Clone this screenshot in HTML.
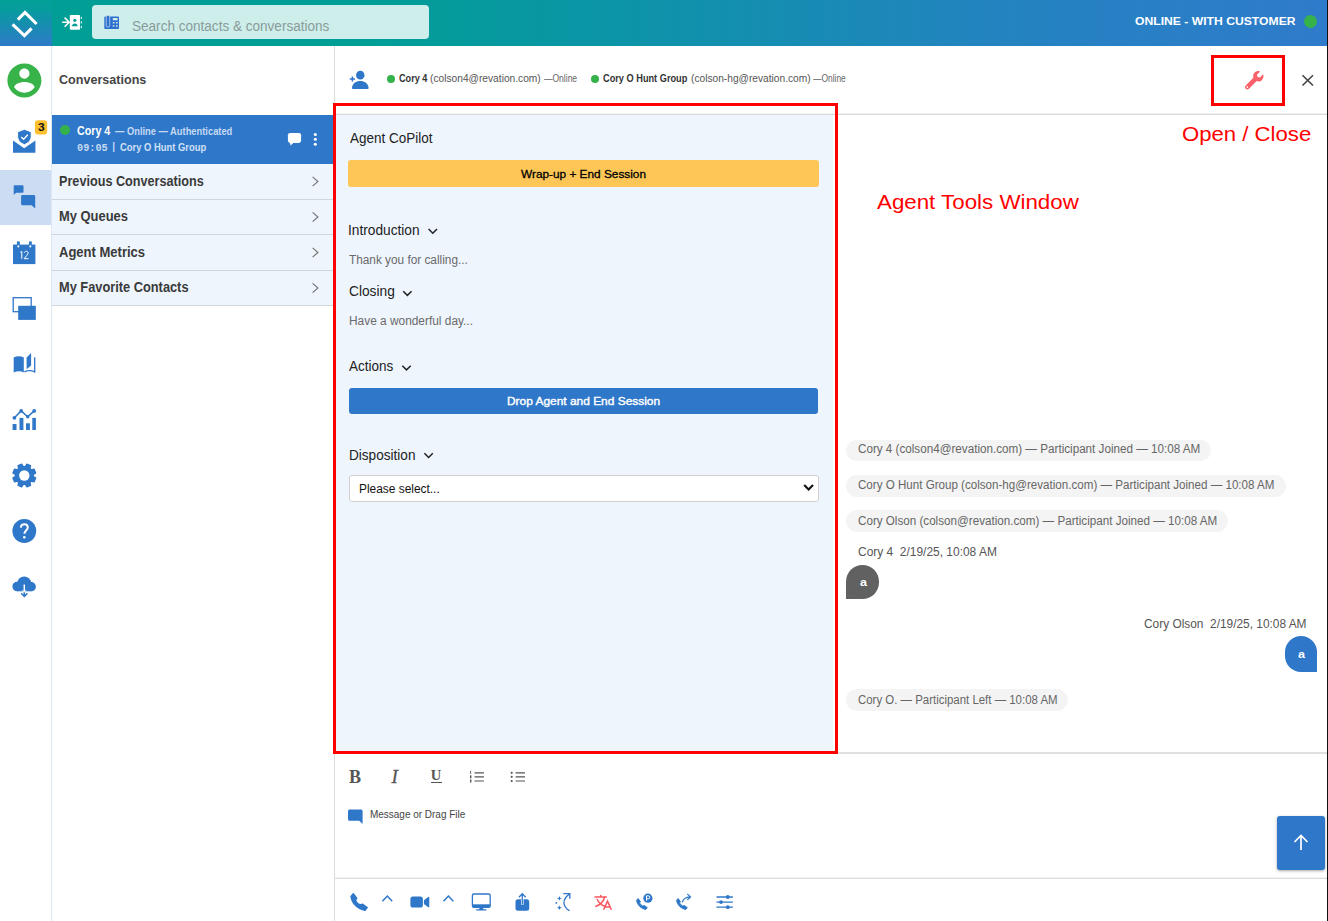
<!DOCTYPE html>
<html>
<head>
<meta charset="utf-8">
<style>
*{box-sizing:border-box;margin:0;padding:0}
html,body{width:1328px;height:921px;overflow:hidden;background:#fff;font-family:"Liberation Sans",sans-serif;color:#333}
.a{position:absolute}
.t{position:absolute;white-space:nowrap;line-height:1;transform-origin:0 0}
svg{position:absolute;overflow:visible}
#hdr{left:0;top:0;width:1328px;height:45.6px;background:linear-gradient(90deg,#019e96 0%,#019e96 28%,#0b95a6 45%,#2383c0 75%,#2f7bcb 100%);box-shadow:0 0 2px rgba(0,20,60,.45)}
#logo{left:0;top:0;width:52px;height:45.6px;background:linear-gradient(180deg,#02a097 0%,#069c9d 20%,#2f7ac9 100%)}
#search{left:92px;top:5.3px;width:337px;height:33.4px;background:#cdeeea;border-radius:4px}
#sdot{left:1304.2px;top:15.2px;width:13.2px;height:13.2px;border-radius:50%;background:#35b34a}
#rail{left:0;top:46px;width:52px;height:875px;background:#fff;border-right:1px solid #dfe7f4}
#railsel{left:0;top:169.7px;width:51px;height:55.5px;background:#ccddf3}
#lp{left:52px;top:46px;width:283px;height:875px;background:#fff;border-right:1px solid #dcdcdc}
#conv{left:52px;top:114.7px;width:282px;height:49.3px;background:#2f77c9}
.row{left:52px;width:282px;height:35.5px;background:#eff5fd;border-bottom:1px solid #cfd6de}
#chdr{left:335px;top:46px;width:992px;height:68.5px;background:#fff;border-bottom:1px solid #d9d9d9;box-shadow:inset 0 -1px 0 #f2f2f2}
#cop{left:335px;top:114.8px;width:497.6px;height:637.2px;background:#eef5fd}
#redbox{left:333.1px;top:103px;width:505px;height:650.9px;border:3px solid #ff0000}
#redbox2{left:1211px;top:55px;width:74px;height:51px;border:3px solid #ff0000}
.pill{background:#f4f4f4;border-radius:11px;height:21.6px}
#edit{left:335px;top:752px;width:992px;height:127px;border-top:2px solid #e0e0e0;border-bottom:1px solid #dcdcdc;background:#fff;box-shadow:inset 0 -1px 0 #f4f4f4}
#rline{left:1327px;top:0;width:1px;height:921px;background:#111}
</style>
</head>
<body>
<div class="a" id="hdr"></div>
<div class="a" id="logo"></div>
<div class="a" id="search"></div>
<div class="a" id="sdot"></div>

<div class="a" id="rail"></div>
<div class="a" id="railsel"></div>
<div class="a" id="lp"></div>
<div class="a" id="conv"></div>
<div class="a" style="left:60px;top:125.4px;width:10px;height:10px;border-radius:50%;background:#35b34a"></div>
<div class="a row" style="top:164.3px"></div>
<div class="a row" style="top:199.8px"></div>
<div class="a row" style="top:235.3px"></div>
<div class="a row" style="top:270.8px"></div>

<div class="a" id="chdr"></div>
<div class="a" style="left:386.8px;top:74.7px;width:8.4px;height:8.4px;border-radius:50%;background:#35b34a"></div>
<div class="a" style="left:591.1px;top:74.7px;width:8.4px;height:8.4px;border-radius:50%;background:#35b34a"></div>
<div class="a" id="cop"></div>
<div class="a" style="left:348px;top:160.2px;width:470.8px;height:26.5px;background:#fdc656;border-radius:3px"></div>
<div class="a" style="left:349px;top:388px;width:469px;height:26px;background:#2f77c9;border-radius:3px"></div>
<div class="a" style="left:349px;top:475.2px;width:470px;height:26.4px;background:#fff;border:1px solid #d0d0d0;border-radius:3px"></div>

<div class="a pill" style="left:846.4px;top:439.6px;width:364.7px"></div>
<div class="a pill" style="left:846.4px;top:475.4px;width:439.3px"></div>
<div class="a pill" style="left:846.4px;top:510.4px;width:381.7px"></div>
<div class="a pill" style="left:846.4px;top:689.3px;width:222px"></div>
<div class="a" style="left:846.3px;top:565px;width:32.8px;height:34.4px;background:#616161;border-radius:17px 17px 17px 0"></div>
<div class="a" style="left:1284.7px;top:636.3px;width:32.6px;height:35.6px;background:#2f77c9;border-radius:17px 17px 0 17px"></div>

<div class="a" id="edit"></div>
<div class="a" style="left:1277px;top:816px;width:48px;height:54px;background:#2f77c9;border-radius:3px;box-shadow:0 1px 3px rgba(0,0,0,.35)"></div>
<div class="a" id="redbox"></div>
<div class="a" id="redbox2"></div>
<div class="a" id="rline"></div>
<!-- logo -->
<svg style="left:0;top:0" width="52" height="46" viewBox="0 0 52 46"><path d="M17.8 19.6 L25 12.5 L36.6 24" fill="none" stroke="#fff" stroke-width="3.1"/><path d="M12.6 24.4 L24.4 35.6 L31.6 28.4" fill="none" stroke="#fff" stroke-width="3.1"/></svg>
<!-- header contacts icon -->
<svg style="left:60px;top:12px" width="26" height="22" viewBox="60 12 26 22"><path d="M62.2 22.2H69.2M64.6 17.6L69.2 22.2L64.6 26.8" fill="none" stroke="#fff" stroke-width="1.5"/><rect x="69.8" y="15" width="10.2" height="14.8" rx="0.8" fill="#fff"/><circle cx="74.8" cy="20.3" r="1.6" fill="#019e96"/><path d="M72 26.2c0-1.8 1.4-2.7 2.8-2.7s2.800.9 2.800 2.700z" fill="#019e96"/><g fill="#fff" opacity=".75"><rect x="80.700" y="16.800" width="1.300" height="2.200"/><rect x="80.700" y="21.300" width="1.300" height="2.200"/><rect x="80.700" y="25.900" width="1.300" height="2.200"/></g></svg>
<!-- deskphone icon -->
<svg style="left:104px;top:15px" width="16" height="15" viewBox="104 15 16 15"><rect x="104.300" y="16.400" width="14.700" height="12.500" rx="1" fill="#2f6fd0"/><rect x="106.200" y="15.300" width="3.500" height="11.800" rx="1.700" fill="#2f6fd0" stroke="#cdeeea" stroke-width=".7"/><rect x="112.800" y="18" width="4.800" height="2.300" fill="#cdeeea"/><g fill="#cdeeea"><rect x="112.800" y="22" width="1.600" height="1.500"/><rect x="116" y="22" width="1.600" height="1.500"/><rect x="112.800" y="25.200" width="1.600" height="1.500"/><rect x="116" y="25.200" width="1.600" height="1.500"/></g></svg>
<!-- rail: avatar -->
<svg style="left:3.8px;top:59.600px" width="40.800" height="40.800" viewBox="0 0 24 24"><path fill="#37b34a" d="M12 2C6.480 2 2 6.480 2 12s4.480 10 10 10 10-4.480 10-10S17.520 2 12 2zm0 3c1.660 0 3 1.340 3 3s-1.340 3-3 3-3-1.340-3-3 1.340-3 3-3zm0 14.200c-2.500 0-4.710-1.280-6-3.220.030-1.990 4-3.080 6-3.080 1.990 0 5.970 1.090 6 3.080-1.290 1.940-3.500 3.220-6 3.220z"/></svg>
<!-- rail: mail shield -->
<svg style="left:0;top:110px" width="52" height="60" viewBox="0 110 52 60"><path fill="#2f77c9" d="M13 140.600L24.200 148.200L35.400 140.600V152.700H13z"/><path fill="#2f77c9" stroke="#fff" stroke-width="1" d="M24.400 129.300l6.800 2.500v4.700c0 3.700-2.900 6.600-6.800 8.200-3.900-1.600-6.800-4.500-6.800-8.200v-4.700z"/><path d="M21.300 136.900l2.300 2.300 4.200-4.400" fill="none" stroke="#fff" stroke-width="1.400"/><rect x="34.900" y="120.200" width="12.300" height="14.300" rx="3" fill="#fdc02f"/></svg>
<!-- rail: chats -->
<svg style="left:0;top:180px" width="52" height="34" viewBox="0 180 52 34"><path fill="#2f77c9" d="M14.500 185.300h8.200a.8.800 0 0 1 .8.800v5.900a.8.800 0 0 1-.8.800h-6.400l-2.600 2v-8.700a.8.800 0 0 1 .8-.8z"/><path fill="#2f77c9" d="M22.300 195h11.700a1.200 1.200 0 0 1 1.200 1.200v12.200l-3.600-3.200h-9.300a1.200 1.200 0 0 1-1.200-1.200v-7.800a1.200 1.200 0 0 1 1.200-1.200z"/></svg>
<!-- rail: calendar -->
<svg style="left:0;top:238px" width="52" height="30" viewBox="0 238 52 30"><rect x="13" y="244.600" width="22.400" height="19.500" fill="#2f77c9"/><rect x="16.900" y="241.400" width="2.900" height="5" fill="#2f77c9"/><rect x="28.900" y="241.400" width="2.900" height="5" fill="#2f77c9"/><rect x="17.400" y="245.200" width="1.900" height="2.200" rx=".9" fill="#fff"/><rect x="29.400" y="245.200" width="1.900" height="2.200" rx=".9" fill="#fff"/><path d="M20.300 252.300l1.500-.9v7.400M24.300 252.700c.3-2 4-1.900 3.800.4-.1 1.500-2.400 3.300-3.900 5.600h4.300" fill="none" stroke="#fff" stroke-width="1"/></svg>
<!-- rail: windows -->
<svg style="left:0;top:294px" width="52" height="30" viewBox="0 294 52 30"><rect x="13.200" y="297.700" width="18" height="14" fill="none" stroke="#2f77c9" stroke-width="1.300"/><rect x="18.200" y="305.800" width="17.600" height="14.100" fill="#2f77c9"/></svg>
<!-- rail: book -->
<svg style="left:0;top:350px" width="52" height="26" viewBox="0 350 52 26"><path fill="#2f77c9" d="M13.700 357.400c3.200-1.600 7-1.600 10.100 0v15c-3.100-1.500-6.900-1.500-10.100.2z"/><path fill="#2f77c9" d="M31.100 353.100v12.400l-4.500 3.800v-11.700z"/><path fill="none" stroke="#2f77c9" stroke-width="1.300" d="M24.400 371.800c3.200-1.500 7-1.500 10.300.1v-14.600"/></svg>
<!-- rail: chart -->
<svg style="left:0;top:406px" width="52" height="28" viewBox="0 406 52 28"><g fill="#2f77c9"><rect x="12.600" y="424" width="3.900" height="6"/><rect x="19.500" y="417.900" width="3.900" height="12.100"/><rect x="26" y="423.300" width="3.900" height="6.700"/><rect x="32.300" y="417.900" width="3.600" height="12.100"/><circle cx="14.400" cy="417.800" r="1.900"/><circle cx="21.200" cy="410.900" r="1.900"/><circle cx="27.700" cy="416.800" r="1.700"/><circle cx="34.200" cy="410.900" r="1.900"/></g><path d="M14.400 417.800L21.200 410.900L27.700 416.800L34.200 410.900" fill="none" stroke="#2f77c9" stroke-width="1.500"/></svg>
<!-- rail: gear -->
<svg style="left:0;top:460px" width="52" height="32" viewBox="0 460 52 32"><path fill="#2f77c9" stroke="#2f77c9" stroke-width="1.6" stroke-linejoin="round" d="M25.48 466.68 L26.84 464.28 L30.43 465.77 L29.71 468.43 L31.37 470.09 L34.03 469.37 L35.52 472.96 L33.12 474.32 L33.12 476.68 L35.52 478.04 L34.03 481.63 L31.37 480.91 L29.71 482.57 L30.43 485.23 L26.84 486.72 L25.48 484.32 L23.12 484.32 L21.76 486.72 L18.17 485.23 L18.89 482.57 L17.23 480.91 L14.57 481.63 L13.08 478.04 L15.48 476.68 L15.48 474.32 L13.08 472.96 L14.57 469.37 L17.23 470.09 L18.89 468.43 L18.17 465.77 L21.76 464.28 L23.12 466.68Z"/><circle cx="24.3" cy="475.5" r="5.2" fill="#fff"/></svg>
<!-- rail: help -->
<svg style="left:0;top:516px" width="52" height="30" viewBox="0 516 52 30"><circle cx="24.300" cy="531" r="11.900" fill="#2f77c9"/><path d="M20.800 527.600c.2-4.600 7-4.500 7 0 0 2.900-3.400 3.100-3.400 6.200" fill="none" stroke="#fff" stroke-width="2"/><circle cx="24.300" cy="537.300" r="1.300" fill="#fff"/></svg>
<!-- rail: cloud -->
<svg style="left:0;top:572px" width="52" height="30" viewBox="0 572 52 30"><g fill="#2f77c9"><circle cx="17.200" cy="586.500" r="4.800"/><circle cx="24.200" cy="583.400" r="7"/><circle cx="31.300" cy="586.700" r="4.600"/><rect x="17.200" y="585" width="14.100" height="6.300"/></g><path d="M24.300 585v10.800M21.200 593.200l3.100 3.300 3.100-3.300" fill="none" stroke="#2f77c9" stroke-width="1.500"/><path d="M24.300 584.500v7.300" fill="none" stroke="#fff" stroke-width="1.500"/><path d="M22.300 590.300l2 1.700 2-1.700" fill="none" stroke="#fff" stroke-width=".9"/></svg>
<!-- conv item icons -->
<svg style="left:286px;top:130px" width="34" height="18" viewBox="286 130 34 18"><rect x="287.900" y="133" width="13.200" height="9.900" rx="2.300" fill="#fff"/><path fill="#fff" d="M289.700 142l.900 3.500 3.700-3.500z"/><circle cx="315.300" cy="134.500" r="1.550" fill="#fff"/><circle cx="315.300" cy="139.300" r="1.550" fill="#fff"/><circle cx="315.300" cy="144.200" r="1.550" fill="#fff"/></svg>
<!-- row chevrons -->
<svg style="left:310px;top:170px" width="12" height="130" viewBox="310 170 12 130"><g fill="none" stroke="#777" stroke-width="1.200"><path d="M312.600 176.900l5.300 4.600-5.300 4.600"/><path d="M312.600 212.400l5.300 4.600-5.300 4.600"/><path d="M312.600 247.900l5.300 4.600-5.300 4.600"/><path d="M312.600 283.400l5.300 4.600-5.300 4.600"/></g></svg>
<!-- add person -->
<svg style="left:348px;top:68px" width="24" height="24" viewBox="348 68 24 24"><ellipse cx="360.300" cy="75.200" rx="4.200" ry="4.400" fill="#2f77c9"/><path fill="#2f77c9" d="M352 88c.3-4.600 4.200-6.900 8.300-6.900s8 2.300 8.300 6.900a.9.900 0 0 1-.9.900h-14.800a.9.900 0 0 1-.9-.9z"/><path d="M349.800 79h5.200M352.400 76.400v5.200" stroke="#2f77c9" stroke-width="1.500" fill="none"/></svg>
<!-- wrench -->
<svg style="left:1244.800px;top:71.100px" width="18.500" height="18.500" viewBox="0 0 512 512"><path fill="#f9626a" d="M507.730 109.100c-2.240-9.030-13.540-12.090-20.120-5.510l-74.360 74.360-67.880-11.310-11.310-67.880 74.360-74.360c6.620-6.620 3.430-17.900-5.660-20.160-47.380-11.740-99.550.91-136.580 37.930-39.640 39.640-50.550 97.100-34.050 147.200L18.740 402.760c-24.990 24.990-24.990 65.510 0 90.500 24.990 24.990 65.510 24.990 90.500 0l213.210-213.210c50.120 16.710 107.470 5.680 147.370-34.220 37.070-37.070 49.700-89.320 37.910-136.730zM64 472c-13.250 0-24-10.750-24-24 0-13.260 10.750-24 24-24s24 10.740 24 24c0 13.250-10.750 24-24 24z"/></svg>
<!-- close X -->
<svg style="left:1300px;top:72px" width="16" height="16" viewBox="1300 72 16 16"><path d="M1302.500 75.200l10.500 10.300M1313 75.200l-10.500 10.300" stroke="#444" stroke-width="1.600" fill="none"/></svg>
<!-- copilot chevrons -->
<svg style="left:400px;top:225px" width="40" height="240" viewBox="400 225 40 240"><g fill="none" stroke="#222" stroke-width="1.500"><path d="M428.600 229l4.200 4.200 4.200-4.200"/><path d="M403.200 291.200l4.200 4.200 4.200-4.200"/><path d="M402.300 365.700l4.200 4.200 4.200-4.200"/><path d="M424.400 453.300l4.200 4.200 4.200-4.200"/></g></svg>
<!-- select arrow -->
<svg style="left:802px;top:482px" width="14" height="12" viewBox="802 482 14 12"><path d="M804.200 485l4.400 4.500 4.400-4.500" fill="none" stroke="#111" stroke-width="2.100"/></svg>
<!-- editor toolbar -->
<div class="a" style="left:431.200px;top:782.200px;width:11.200px;height:1.200px;background:#555"></div>
<svg style="left:468px;top:768px" width="60" height="18" viewBox="468 768 60 18"><g stroke="#555" stroke-width="1.200" fill="none"><path d="M474.500 772.800h9.400M474.500 776.800h9.400M474.500 781h9.400"/><path d="M515.600 772.800h9.400M515.600 776.800h9.400M515.600 781h9.400"/></g><g fill="#555"><rect x="470.200" y="770.800" width=".9" height="3"/><rect x="470" y="775.300" width="1.400" height="3"/><rect x="470" y="779.500" width="1.400" height="3"/><circle cx="511.700" cy="772.800" r="1.100"/><circle cx="511.700" cy="776.800" r="1.100"/><circle cx="511.700" cy="781" r="1.100"/></g></svg>
<!-- message icon -->
<svg style="left:347px;top:808px" width="18" height="18" viewBox="347 808 18 18"><path fill="#2f77c9" d="M349.500 809.400h11.600a1.500 1.500 0 0 1 1.500 1.500v13.100l-3.400-3.300h-9.700a1.500 1.500 0 0 1-1.500-1.500v-8.300a1.500 1.500 0 0 1 1.500-1.500z"/></svg>
<!-- send arrow -->
<svg style="left:1290px;top:832px" width="22" height="22" viewBox="1290 832 22 22"><path d="M1301 850v-14.500M1294.500 842l6.500-6.500 6.500 6.500" fill="none" stroke="#fff" stroke-width="1.700"/></svg>
<!-- bottom bar icons -->
<svg style="left:346px;top:889px" width="26" height="26" viewBox="346 889 26 26"><path fill="#2f77c9" stroke="#2f77c9" stroke-width="1.400" stroke-linejoin="round" d="M353.300 893.800L356.700 898.200L355.500 900.500C356.500 902.500 358.200 904.100 360.200 905L362.700 904.200L367.200 907.500L365 910.200C357.800 909.200 352 903.500 351 896.400Z"/></svg>
<svg style="left:380px;top:890px" width="360" height="24" viewBox="380 890 360 24">
<g fill="none" stroke="#2f77c9" stroke-width="1.500"><path d="M382.400 901.200l4.900-5.200 4.900 5.200"/><path d="M443.500 901.200l4.900-5.200 4.900 5.200"/></g>
<rect x="410.400" y="896.500" width="12.500" height="11.100" rx="2.600" fill="#2f77c9"/><path fill="#2f77c9" d="M423.900 900.300l4.300-3.300a.7.700 0 0 1 1.100.6v9a.7.700 0 0 1-1.100.6l-4.300-3.300z"/>
<!-- monitor -->
<rect x="472.400" y="894" width="17.800" height="13.300" rx="1.500" fill="none" stroke="#2f77c9" stroke-width="1.300"/><rect x="472.400" y="904.300" width="17.800" height="3" fill="#2f77c9"/><path fill="#2f77c9" d="M479.700 907.300h3.200l.5 1.900h2.600a.5.500 0 0 1 0 1.300h-9.400a.5.500 0 0 1 0-1.300h2.600z"/>
<!-- share -->
<rect x="515.500" y="899.200" width="13.700" height="11.600" rx="2.500" fill="#2f77c9"/><path d="M522.300 904.800v-10.800" stroke="#fff" stroke-width="2.600" fill="none"/><path d="M522.300 904.600v-10.600M518.900 897.200l3.400-3.500 3.400 3.500" stroke="#2f77c9" stroke-width="1.300" fill="none"/>
<!-- magic -->
<path d="M569.600 910.800c-7.500-4.500-7.500-11.500-.2-16.900M563.300 893.600h6.500v5.200" fill="none" stroke="#2f77c9" stroke-width="1.300"/><path fill="#2f77c9" d="M559.400 896l.7 1.700 1.800.7-1.800.7-.7 1.700-.7-1.700-1.800-.7 1.800-.7zM559.400 905.300l.7 1.700 1.800.7-1.800.7-.7 1.700-.7-1.700-1.800-.7 1.800-.7z"/><circle cx="556.300" cy="902.900" r=".9" fill="#2f77c9"/>
<!-- translate -->
<g fill="none" stroke="#f8575f" stroke-width="1.500"><path d="M594.500 897h12.400M600.700 895v2M597 899c1.500 3.500 4.500 6 8 7.500M604.700 897c-1 4-4.500 8-9.500 9.600"/><path d="M603.600 909.700l3.900-8.600 3.900 8.600M605 907h5"/></g>
<!-- sliders -->
<g stroke="#2f77c9" stroke-width="1.300" fill="none"><path d="M716.500 897h16.400M716.500 902.100h16.400M716.500 907.200h16.400"/></g><g fill="#2f77c9"><circle cx="727.800" cy="897" r="1.900"/><circle cx="721" cy="902.100" r="1.900"/><circle cx="727.800" cy="907.200" r="1.900"/></g>
<!-- P circle & fwd arrow -->
<circle cx="647.900" cy="898.200" r="4.600" fill="#2f77c9"/><path d="M646.500 900.800v-5h1.800a1.500 1.500 0 0 1 0 3h-1.800" fill="none" stroke="#fff" stroke-width="1"/>
<path d="M682.300 902.300c.8-3.300 3.500-5.200 7.800-5.400M687.300 893.900l3.200 3-3.200 3" fill="none" stroke="#2f77c9" stroke-width="1.300"/>
</svg>
<svg style="left:633.7px;top:895.5px" width="18" height="18" viewBox="633.7 895.5 18 18"><path transform="translate(635.7 897.5) scale(.66) translate(-350.1 -892.9)" fill="#2f77c9" stroke="#2f77c9" stroke-width="1.500" stroke-linejoin="round" d="M353.300 893.800L356.700 898.200L355.500 900.500C356.500 902.500 358.200 904.100 360.200 905L362.700 904.200L367.200 907.500L365 910.200C357.800 909.200 352 903.500 351 896.400Z"/></svg>
<svg style="left:673.5px;top:895.5px" width="18" height="18" viewBox="673.5 895.5 18 18"><path transform="translate(675.5 897.5) scale(.66) translate(-350.1 -892.9)" fill="#2f77c9" stroke="#2f77c9" stroke-width="1.500" stroke-linejoin="round" d="M353.300 893.800L356.700 898.200L355.500 900.500C356.500 902.500 358.200 904.100 360.200 905L362.700 904.200L367.200 907.500L365 910.200C357.800 909.200 352 903.500 351 896.400Z"/></svg>
<div class="t" style="left:132.15px;top:19.00px;font-size:14px;color:#8a9b9a;transform:scaleX(0.9680);">Search contacts &amp; conversations</div>
<div class="t" style="left:1135.47px;top:16.00px;font-size:11.5px;font-weight:bold;color:#fff;transform:scaleX(1.0573);">ONLINE - WITH CUSTOMER</div>
<div class="t" style="left:58.97px;top:73.00px;font-size:13.5px;font-weight:bold;color:#444;transform:scaleX(0.9311);">Conversations</div>
<div class="t" style="left:77.31px;top:125.00px;font-size:12px;font-weight:bold;color:#fff;transform:scaleX(0.8921);">Cory 4</div>
<div class="t" style="left:114.50px;top:127.00px;font-size:10.3px;font-weight:bold;color:#c5d9f2;transform:scaleX(0.9060);">— Online — Authenticated</div>
<div class="t" style="left:76.70px;top:142.00px;font-size:11.5px;font-weight:bold;color:#c5d9f2;font-family:'Liberation Mono',monospace;transform:scaleX(0.8901);">09:05</div>
<div class="t" style="left:112.25px;top:142.00px;font-size:10px;font-weight:bold;color:#c5d9f2;">|</div>
<div class="t" style="left:120.04px;top:142.00px;font-size:11px;font-weight:bold;color:#cfe0f5;transform:scaleX(0.8550);">Cory O Hunt Group</div>
<div class="t" style="left:58.92px;top:174.00px;font-size:14px;font-weight:bold;color:#3a3a3a;transform:scaleX(0.9031);">Previous Conversations</div>
<div class="t" style="left:58.79px;top:209.00px;font-size:14px;font-weight:bold;color:#3a3a3a;transform:scaleX(0.9239);">My Queues</div>
<div class="t" style="left:59.29px;top:245.00px;font-size:14px;font-weight:bold;color:#3a3a3a;transform:scaleX(0.9294);">Agent Metrics</div>
<div class="t" style="left:58.88px;top:280.00px;font-size:14px;font-weight:bold;color:#3a3a3a;transform:scaleX(0.9147);">My Favorite Contacts</div>
<div class="t" style="left:398.90px;top:73.00px;font-size:10.5px;font-weight:bold;color:#333;transform:scaleX(0.8701);">Cory 4</div>
<div class="t" style="left:430.43px;top:73.00px;font-size:10.5px;color:#555;transform:scaleX(0.9721);">(colson4@revation.com)</div>
<div class="t" style="left:544.01px;top:74.00px;font-size:10px;color:#666;transform:scaleX(0.8506);">—Online</div>
<div class="t" style="left:603.40px;top:73.00px;font-size:10.5px;font-weight:bold;color:#333;transform:scaleX(0.8764);">Cory O Hunt Group</div>
<div class="t" style="left:690.93px;top:73.00px;font-size:10.5px;color:#555;transform:scaleX(0.9701);">(colson-hg@revation.com)</div>
<div class="t" style="left:813.01px;top:74.00px;font-size:10px;color:#666;transform:scaleX(0.8424);">—Online</div>
<div class="t" style="left:1182.25px;top:124.00px;font-size:20px;color:#f00;transform:scaleX(1.1071);">Open / Close</div>
<div class="t" style="left:877.49px;top:192.00px;font-size:20px;color:#f00;transform:scaleX(1.1158);">Agent Tools Window</div>
<div class="t" style="left:350.16px;top:131.00px;font-size:14px;color:#222;transform:scaleX(0.9629);">Agent CoPilot</div>
<div class="t" style="left:520.62px;top:168.00px;font-size:11.7px;color:#000;transform:scaleX(1.0119);-webkit-text-stroke:.3px #000;">Wrap-up + End Session</div>
<div class="t" style="left:347.57px;top:223.00px;font-size:14px;color:#222;transform:scaleX(0.9789);">Introduction</div>
<div class="t" style="left:348.60px;top:254.00px;font-size:12px;color:#6a6a6a;transform:scaleX(0.9839);">Thank you for calling...</div>
<div class="t" style="left:348.73px;top:284.00px;font-size:14px;color:#222;transform:scaleX(0.9810);">Closing</div>
<div class="t" style="left:348.50px;top:315.00px;font-size:12px;color:#6a6a6a;transform:scaleX(0.9902);">Have a wonderful day...</div>
<div class="t" style="left:348.66px;top:359.00px;font-size:14px;color:#222;transform:scaleX(0.9634);">Actions</div>
<div class="t" style="left:506.95px;top:395.00px;font-size:11.7px;color:#fff;transform:scaleX(1.0200);-webkit-text-stroke:.4px #fff;">Drop Agent and End Session</div>
<div class="t" style="left:348.59px;top:448.00px;font-size:14px;color:#222;transform:scaleX(0.9704);">Disposition</div>
<div class="t" style="left:358.50px;top:483.00px;font-size:12px;color:#111;transform:scaleX(0.9919);">Please select...</div>
<div class="t" style="left:858.20px;top:443.00px;font-size:12px;color:#666;transform:scaleX(0.9716);">Cory 4 (colson4@revation.com) — Participant Joined — 10:08 AM</div>
<div class="t" style="left:858.20px;top:479.00px;font-size:12px;color:#666;transform:scaleX(0.9662);">Cory O Hunt Group (colson-hg@revation.com) — Participant Joined — 10:08 AM</div>
<div class="t" style="left:858.20px;top:515.00px;font-size:12px;color:#666;transform:scaleX(0.9700);">Cory Olson (colson@revation.com) — Participant Joined — 10:08 AM</div>
<div class="t" style="left:858.07px;top:546.00px;font-size:12px;color:#555;transform:scaleX(0.9958);">Cory 4&nbsp; 2/19/25, 10:08 AM</div>
<div class="t" style="left:859.81px;top:577.00px;font-size:11.5px;font-weight:bold;color:#fff;transform:scaleX(1.0940);">a</div>
<div class="t" style="left:1144.13px;top:618.00px;font-size:12px;color:#555;transform:scaleX(0.9901);">Cory Olson&nbsp; 2/19/25, 10:08 AM</div>
<div class="t" style="left:1298.31px;top:649.00px;font-size:11.5px;font-weight:bold;color:#fff;transform:scaleX(1.0918);">a</div>
<div class="t" style="left:858.20px;top:694.00px;font-size:12px;color:#666;transform:scaleX(0.9529);">Cory O. — Participant Left — 10:08 AM</div>
<div class="t" style="left:369.97px;top:809.00px;font-size:10.5px;color:#444;transform:scaleX(0.9494);">Message or Drag File</div>
<div class="t" style="left:349.47px;top:767.00px;font-size:19px;font-weight:bold;color:#555;font-family:'Liberation Serif',serif;transform:scaleX(0.9515);">B</div>
<div class="t" style="left:391.53px;top:767.00px;font-size:19px;color:#555;font-family:'Liberation Serif',serif;font-style:italic;-webkit-text-stroke:.3px #555;">I</div>
<div class="t" style="left:430.64px;top:768.00px;font-size:14.5px;font-weight:bold;color:#555;font-family:'Liberation Serif',serif;">U</div>
<div class="t" style="left:37.70px;top:122.00px;font-size:10.5px;font-weight:bold;color:#111;transform:scaleX(1.1491);">3</div>
</body>
</html>
